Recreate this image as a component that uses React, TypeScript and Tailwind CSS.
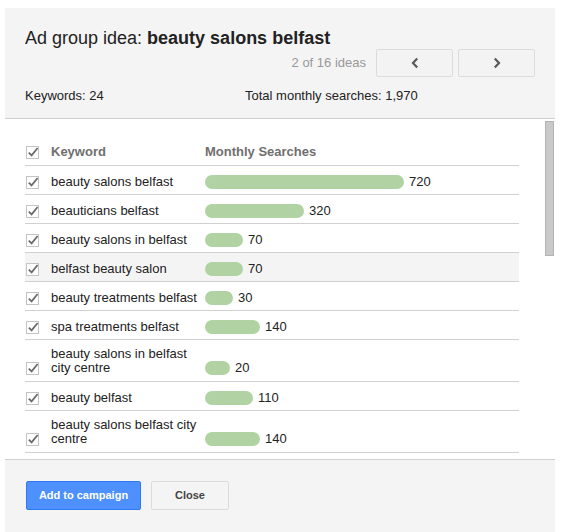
import React from "react";

const rows: { kw: string; n: string; w: number; two?: boolean; hl?: boolean }[] = [
  { kw: "beauty salons belfast", n: "720", w: 199 },
  { kw: "beauticians belfast", n: "320", w: 99 },
  { kw: "beauty salons in belfast", n: "70", w: 38 },
  { kw: "belfast beauty salon", n: "70", w: 38, hl: true },
  { kw: "beauty treatments belfast", n: "30", w: 28 },
  { kw: "spa treatments belfast", n: "140", w: 55 },
  { kw: "beauty salons in belfast city centre", n: "20", w: 25, two: true },
  { kw: "beauty belfast", n: "110", w: 48 },
  { kw: "beauty salons belfast city centre", n: "140", w: 55, two: true },
];

function Check() {
  return (
    <svg width="14" height="14" viewBox="0 0 14 14" className="block">
      <rect x="0.5" y="1.5" width="12" height="12" fill="#fff" stroke="#c4c4c4" />
      <path d="M2.8 7.6 L5.6 10.4 L11.6 3" fill="none" stroke="#6b6b6b" strokeWidth="1.8" />
    </svg>
  );
}

export default function App() {
  return (
    <div className="w-[563px] h-[532px] bg-white overflow-hidden pt-[8px] pl-[5px]" style={{ fontFamily: '"Liberation Sans", Arial, sans-serif' }}>
      <div className="w-[550px] h-[524px] bg-white flex flex-col">
        {/* header */}
        <div className="bg-[#f4f4f4] border-b border-[#cfcfcf] pl-[20px] pr-[20px] pt-[19px] pb-[15px] h-[111px]">
          <div className="text-[18px] leading-[22px] text-[#222]">
            Ad group idea: <span className="font-bold">beauty salons belfast</span>
          </div>
          <div className="flex items-center justify-end gap-[10px]">
            <span className="text-[13px] text-[#999]">2 of 16 ideas</span>
            <div className="flex gap-[5px]">
              <button className="w-[77px] h-[28px] bg-[#f3f3f3] border border-[#dcdcdc] rounded-[2px] flex items-center justify-center">
                <svg width="10" height="14" viewBox="0 0 10 14">
                  <path d="M7.2 2.5 L3 7 L7.2 11.5" fill="none" stroke="#5a5a5a" strokeWidth="2.2" />
                </svg>
              </button>
              <button className="w-[77px] h-[28px] bg-[#f3f3f3] border border-[#dcdcdc] rounded-[2px] flex items-center justify-center">
                <svg width="10" height="14" viewBox="0 0 10 14">
                  <path d="M2.8 2.5 L7 7 L2.8 11.5" fill="none" stroke="#5a5a5a" strokeWidth="2.2" />
                </svg>
              </button>
            </div>
          </div>
          <div className="flex text-[13px] leading-[15px] text-[#222] mt-[11px]">
            <div className="w-[220px]">Keywords: 24</div>
            <div>Total monthly searches: 1,970</div>
          </div>
        </div>
        {/* body */}
        <div className="h-[340px] flex overflow-hidden">
          <div className="pl-[20px] pt-[18px] w-[540px]">
            <div className="w-[494px]">
              <div className="flex items-end pt-[8px] pb-[6px] border-b border-[#d0d0d0] leading-[14px]">
                <div className="w-[26px] h-[14px] pl-[1px] flex items-center"><Check /></div>
                <div className="w-[154px] text-[13px] font-bold text-[#6f6f6f]">Keyword</div>
                <div className="text-[13px] font-bold text-[#6f6f6f]">Monthly Searches</div>
              </div>
              {rows.map((r, i) => (
                <div
                  key={i}
                  className={`flex items-end border-b border-[#d0d0d0] leading-[14px] ${r.two ? "pt-[7px] pb-[6px]" : "pt-[9px] pb-[5px]"} ${r.hl ? "bg-[#f4f4f4]" : ""}`}
                >
                  <div className="w-[26px] h-[14px] pl-[1px] flex items-center"><Check /></div>
                  <div className="w-[154px] pr-[4px] text-[13px] text-[#222]">{r.kw}</div>
                  <div className="flex items-center h-[14px]">
                    <div className="h-[14px] rounded-full bg-[#b1d3a4]" style={{ width: r.w }} />
                    <span className="ml-[5px] text-[13px] text-[#222]">{r.n}</span>
                  </div>
                </div>
              ))}
            </div>
          </div>
          <div className="w-[9px] pt-[2px]">
            <div className="h-[135px] bg-[#c9c9c9] border border-[#b3b3b3]" />
          </div>
        </div>
        {/* footer */}
        <div className="flex-1 bg-[#f4f4f4] border-t border-[#cfcfcf] pl-[21px] pt-[21px] flex items-start gap-[10px]">
          <button className="h-[29px] w-[115px] bg-[#4d90fe] border border-[#3079ed] rounded-[2px] text-white text-[11px] font-bold">
            Add to campaign
          </button>
          <button className="h-[29px] w-[78px] bg-[#f4f4f4] border border-[#dcdcdc] rounded-[2px] text-[#444] text-[11px] font-bold">
            Close
          </button>
        </div>
      </div>
    </div>
  );
}
